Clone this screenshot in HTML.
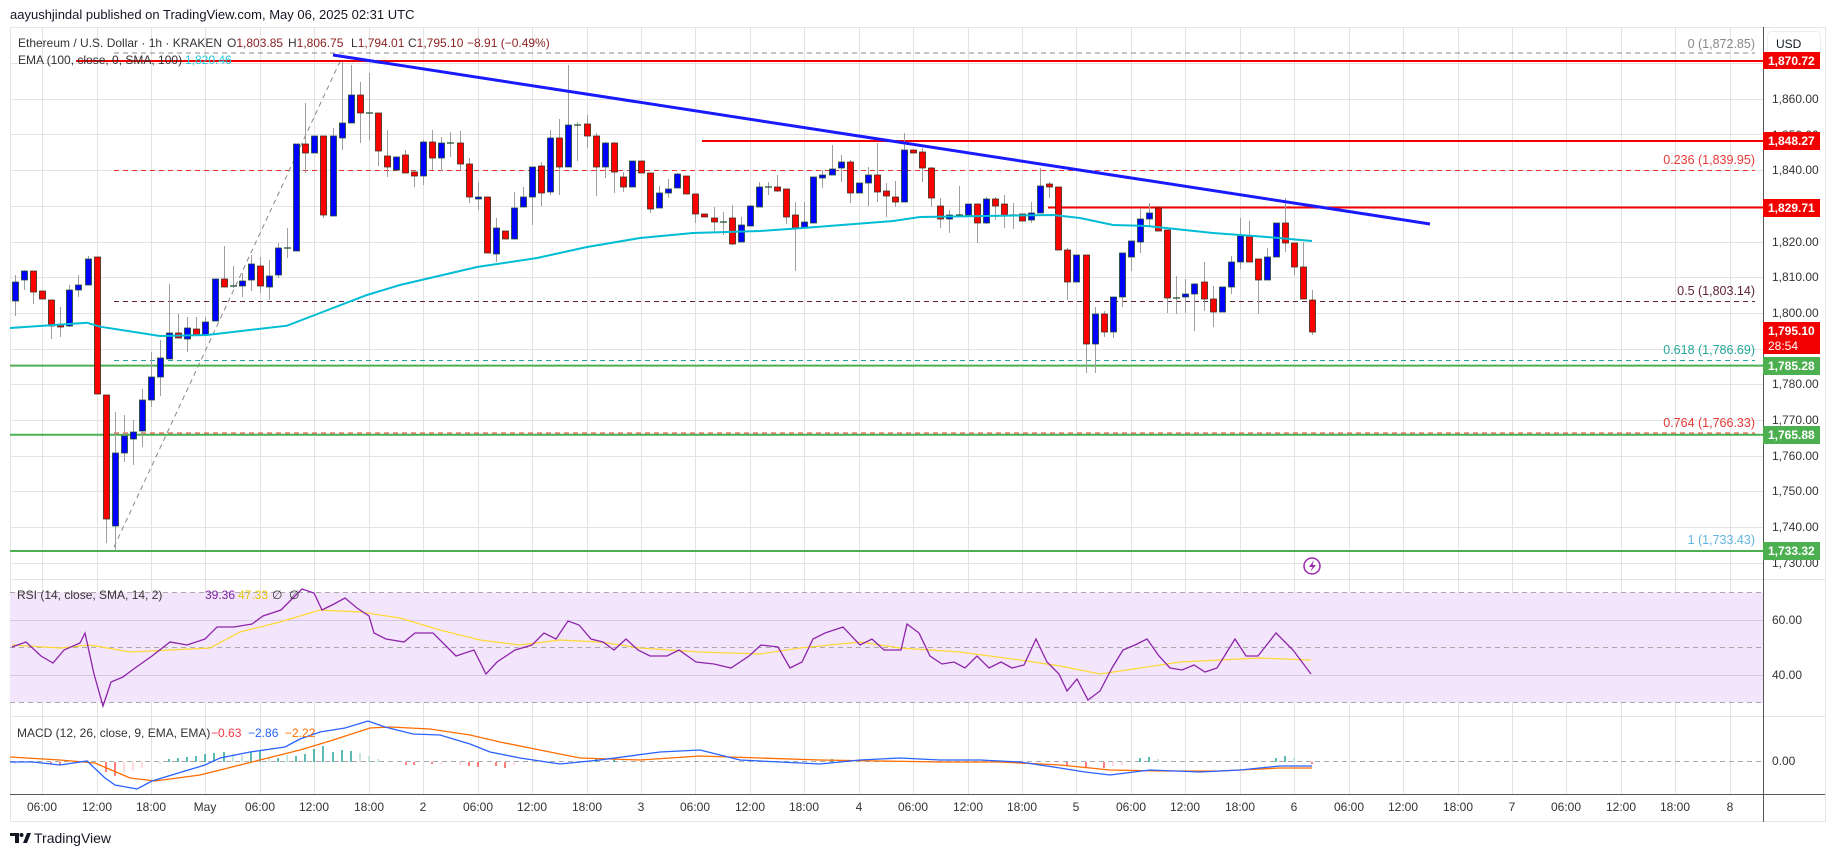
<!DOCTYPE html>
<html><head><meta charset="utf-8">
<style>
html,body{margin:0;padding:0;background:#fff;width:1835px;height:857px;overflow:hidden}
svg{display:block;font-family:"Liberation Sans","DejaVu Sans",sans-serif}
</style></head><body>
<svg width="1835" height="857" viewBox="0 0 1835 857" xmlns="http://www.w3.org/2000/svg">
<rect x="0" y="0" width="1835" height="857" fill="#fff"/>
<text x="10" y="19" font-size="13" fill="#131722">aayushjindal published on TradingView.com, May 06, 2025 02:31 UTC</text>
<rect x="10.5" y="27.5" width="1815" height="794" fill="#fff" stroke="#e6e6e6"/>
<!-- vertical grid -->
<path stroke="#e3e3e3" fill="none" d="M42.5 27V794M97.5 27V794M151.5 27V794M205.5 27V794M260.5 27V794M314.5 27V794M369.5 27V794M423.5 27V794M478.5 27V794M532.5 27V794M587.5 27V794M641.5 27V794M695.5 27V794M750.5 27V794M804.5 27V794M859.5 27V794M913.5 27V794M968.5 27V794M1022.5 27V794M1076.5 27V794M1131.5 27V794M1185.5 27V794M1240.5 27V794M1294.5 27V794M1349.5 27V794M1403.5 27V794M1458.5 27V794M1512.5 27V794M1566.5 27V794M1621.5 27V794M1675.5 27V794M1730.5 27V794"/>
<!-- horizontal price grid -->
<path stroke="#e3e3e3" fill="none" d="M10 63.5H1763M10 99.5H1763M10 134.5H1763M10 170.5H1763M10 206.5H1763M10 242.5H1763M10 277.5H1763M10 313.5H1763M10 349.5H1763M10 384.5H1763M10 420.5H1763M10 456.5H1763M10 491.5H1763M10 527.5H1763M10 563.5H1763"/>
<!-- RSI pane -->
<rect x="10" y="592.5" width="1753" height="110" fill="#f3e6fc"/>
<path stroke="#d5c8e3" d="M10 620.5H1763M10 675.5H1763"/>
<path stroke="#aaa" stroke-dasharray="5,4" d="M10 592.5H1763M10 647.5H1763M10 702.5H1763M10 761.5H1763"/>
<!-- fib lines -->
<g stroke-dasharray="5,4" fill="none">
<path d="M114 53H1755" stroke="#888"/>
<path d="M114 170.5H1755" stroke="#e53935"/>
<path d="M114 301.5H1755" stroke="#5d1f37"/>
<path d="M114 360.5H1755" stroke="#26a69a"/>
<path d="M114 433H1755" stroke="#e53935"/>
<path d="M114 551H1755" stroke="#5fb4e0"/>
<path d="M114 547L343 55" stroke="#888"/>
</g>
<path stroke="#4caf50" stroke-width="2" d="M10 365.6H1763M10 434.8H1763M10 551H1763"/>
<path stroke="#f20000" stroke-width="2" d="M76 61H1763M702 141H1763M1048 207.5H1763"/>
<!-- wicks -->
<path stroke="#9e9e9e" fill="none" d="M15.5 275V316M24.5 270V290M33.5 271V304M42.5 291V299M51.5 300V339M60.5 307V337M69.5 285V327M78.5 275V297M88.5 256V285M97.5 257V394M106.5 395V543M115.5 412V551M124.5 415V462M133.5 420V465M142.5 389V447M151.5 352V407M160.5 340V396M169.5 284V359M178.5 314V338M187.5 317V352M196.5 317V335M205.5 317V335M215.5 279V321M224.5 246V287M233.5 266V288M242.5 273V297M251.5 255V291M260.5 257V293M269.5 260V300M278.5 243V278M287.5 228V258M296.5 144V251M305.5 103V173M314.5 136V153M323.5 136V218M333.5 128V216M342.5 62V150M351.5 65V123M360.5 82V143M369.5 73V140M378.5 113V166M387.5 130V177M396.5 157V170M405.5 150V173M414.5 170V187M423.5 140V185M432.5 130V170M441.5 137V171M450.5 132V157M460.5 131V170M469.5 158V203M478.5 182V210M487.5 197V253M496.5 218V262M505.5 231V239M514.5 192V239M523.5 187V207M532.5 167V225M541.5 162V206M550.5 130V195M559.5 119V195M568.5 65V167M577.5 122V161M587.5 115V148M596.5 133V196M605.5 142V178M614.5 142V193M623.5 172V192M632.5 161V187M641.5 161V173M650.5 173V213M659.5 186V208M668.5 179V198M677.5 173V188M686.5 176V194M695.5 194V223M704.5 214V217M714.5 207V231M723.5 212V235M732.5 205V245M741.5 217V242M750.5 205V226M759.5 182V207M768.5 182V195M777.5 175V192M786.5 189V224M795.5 202V271M804.5 202V228M813.5 177V223M822.5 170V188M832.5 145V175M841.5 155V182M850.5 160V203M859.5 183V193M868.5 167V206M877.5 143V202M886.5 183V217M895.5 181V207M904.5 133V202M913.5 150V153M922.5 148V182M931.5 167V207M940.5 198V228M949.5 210V233M959.5 186V217M968.5 204V216M977.5 204V243M986.5 197V224M995.5 197V220M1004.5 195V228M1013.5 203V229M1022.5 214V221M1031.5 202V223M1040.5 168V213M1049.5 182V198M1058.5 187V250M1067.5 248V300M1076.5 255V282M1086.5 255V373M1095.5 307V373M1104.5 311V337M1113.5 297V338M1122.5 253V307M1131.5 241V271M1140.5 208V253M1149.5 203V227M1158.5 208V231M1167.5 230V313M1176.5 276V314M1185.5 279V313M1194.5 283V331M1204.5 262V311M1213.5 286V327M1222.5 287V312M1231.5 256V294M1240.5 218V269M1249.5 221V262M1258.5 259V314M1267.5 248V280M1276.5 223V257M1285.5 198V252M1294.5 243V275M1303.5 242V299M1312.5 290V335"/>
<!-- blue bodies -->
<path fill="#0000ff" stroke="#1e4d2b" stroke-width="0.8" d="M12.5 282h6V301h-6ZM21.5 271h6V280h-6ZM66.5 290h6V326h-6ZM75.5 285h6V290h-6ZM85.5 259h6V285h-6ZM112.5 453h6V526h-6ZM121.5 436h6V453h-6ZM130.5 432h6V439h-6ZM139.5 400h6V431h-6ZM148.5 377h6V400h-6ZM157.5 358h6V377h-6ZM166.5 333h6V359h-6ZM184.5 328h6V339h-6ZM202.5 322h6V335h-6ZM212.5 279h6V321h-6ZM239.5 281h6V286h-6ZM248.5 264h6V280h-6ZM266.5 276h6V287h-6ZM275.5 248h6V275h-6ZM293.5 144h6V251h-6ZM311.5 136h6V153h-6ZM330.5 136h6V216h-6ZM339.5 123h6V138h-6ZM348.5 95h6V123h-6ZM393.5 157h6V170h-6ZM420.5 142h6V176h-6ZM438.5 143h6V158h-6ZM475.5 197h6V199h-6ZM493.5 228h6V254h-6ZM511.5 208h6V239h-6ZM520.5 197h6V207h-6ZM529.5 167h6V197h-6ZM547.5 138h6V192h-6ZM565.5 125h6V167h-6ZM602.5 143h6V167h-6ZM629.5 161h6V187h-6ZM656.5 193h6V208h-6ZM665.5 189h6V193h-6ZM674.5 174h6V188h-6ZM738.5 225h6V242h-6ZM747.5 206h6V226h-6ZM756.5 187h6V207h-6ZM801.5 222h6V228h-6ZM810.5 177h6V223h-6ZM819.5 175h6V178h-6ZM829.5 169h6V175h-6ZM838.5 162h6V168h-6ZM856.5 183h6V193h-6ZM865.5 175h6V183h-6ZM901.5 150h6V202h-6ZM946.5 215h6V219h-6ZM965.5 204h6V215h-6ZM983.5 199h6V223h-6ZM1028.5 213h6V220h-6ZM1037.5 186h6V213h-6ZM1073.5 255h6V282h-6ZM1092.5 314h6V344h-6ZM1110.5 297h6V332h-6ZM1119.5 253h6V297h-6ZM1128.5 241h6V257h-6ZM1137.5 219h6V242h-6ZM1146.5 213h6V219h-6ZM1182.5 294h6V297h-6ZM1191.5 284h6V294h-6ZM1219.5 287h6V312h-6ZM1228.5 262h6V287h-6ZM1237.5 236h6V262h-6ZM1264.5 257h6V280h-6ZM1273.5 223h6V257h-6Z"/>
<!-- red bodies -->
<path fill="#ff0000" stroke="#3b2a1a" stroke-width="0.8" d="M30.5 271h6V292h-6ZM39.5 291h6V299h-6ZM48.5 300h6V326h-6ZM57.5 325h6V327h-6ZM94.5 257h6V394h-6ZM103.5 395h6V519h-6ZM175.5 333h6V338h-6ZM193.5 329h6V335h-6ZM221.5 279h6V287h-6ZM257.5 266h6V286h-6ZM302.5 144h6V153h-6ZM320.5 136h6V215h-6ZM357.5 95h6V113h-6ZM375.5 113h6V151h-6ZM384.5 156h6V167h-6ZM402.5 155h6V173h-6ZM411.5 172h6V176h-6ZM429.5 142h6V158h-6ZM457.5 143h6V164h-6ZM466.5 164h6V197h-6ZM484.5 197h6V253h-6ZM502.5 231h6V239h-6ZM538.5 166h6V193h-6ZM556.5 138h6V167h-6ZM584.5 124h6V136h-6ZM593.5 136h6V167h-6ZM611.5 143h6V172h-6ZM620.5 177h6V187h-6ZM638.5 161h6V173h-6ZM647.5 173h6V209h-6ZM683.5 176h6V194h-6ZM692.5 194h6V214h-6ZM701.5 214h6V217h-6ZM711.5 218h6V222h-6ZM729.5 218h6V244h-6ZM774.5 187h6V191h-6ZM783.5 189h6V217h-6ZM792.5 215h6V228h-6ZM847.5 162h6V193h-6ZM874.5 175h6V192h-6ZM883.5 191h6V196h-6ZM892.5 197h6V202h-6ZM910.5 150h6V153h-6ZM919.5 152h6V168h-6ZM928.5 168h6V198h-6ZM937.5 206h6V219h-6ZM974.5 204h6V223h-6ZM992.5 199h6V206h-6ZM1001.5 204h6V216h-6ZM1019.5 214h6V221h-6ZM1046.5 184h6V187h-6ZM1055.5 187h6V250h-6ZM1064.5 250h6V282h-6ZM1083.5 255h6V344h-6ZM1101.5 314h6V332h-6ZM1155.5 208h6V231h-6ZM1164.5 230h6V298h-6ZM1201.5 282h6V299h-6ZM1210.5 299h6V312h-6ZM1246.5 236h6V262h-6ZM1255.5 259h6V280h-6ZM1282.5 223h6V243h-6ZM1291.5 243h6V267h-6ZM1300.5 267h6V299h-6ZM1309.5 300h6V332h-6Z"/>
<!-- dojis -->
<path stroke="#1b4d2b" stroke-width="1.2" d="M230 286h7M284 248h7M366 113h7M447 143h7M574 125h7M720 222h7M765 187h7M956 215h7M1010 215h7M1173 298h7"/>
<!-- EMA -->
<polyline fill="none" stroke="#00bcd4" stroke-width="2" points="10,328 87,322.7 100,326.7 160,336 207,335 287,325.7 320,313 367,295 400,285 477,267 537,258 587,247 640,238 693,233 760,231 803,228 893,221 920,217 1053,215 1080,218 1113,225 1147,226 1213,233 1267,237 1312,241"/>
<!-- trend line -->
<line x1="333" y1="55" x2="1430" y2="224" stroke="#1a1aff" stroke-width="3"/>
<!-- RSI -->
<polyline fill="none" stroke="#fdd835" stroke-width="1.2" points="12,645 60,648 90,645 130,652 170,650 210,648 240,632 280,622 320,610 360,612 400,618 440,630 480,640 520,645 560,640 600,642 640,648 700,652 760,654 800,648 860,642 900,648 960,652 1020,660 1060,666 1100,674 1140,668 1180,662 1220,660 1260,658 1311,660"/>
<polyline fill="none" stroke="#8e24aa" stroke-width="1.3" points="12,647 26,642 41,656 53,663 64,650 80,643 85,633 94,674 103,706 111,682 123,677 135,668 152,656 170,642 187,645 205,639 217,627 234,627 252,624 263,616 281,610 293,598 302,589 314,593 322,610 334,604 345,598 357,608 369,616 374,633 386,639 404,642 415,633 433,633 445,645 456,656 474,650 486,674 497,662 515,650 532,645 544,633 556,639 568,621 579,625 591,639 603,642 614,650 626,639 638,650 650,656 667,656 679,650 696,662 714,664 731,668 749,656 761,645 778,647 790,668 802,662 813,639 825,633 843,627 860,645 872,639 884,650 901,650 907,624 919,633 930,656 942,664 954,662 965,668 977,656 989,668 1001,662 1012,668 1024,665 1036,639 1047,662 1059,674 1067,691 1077,679 1088,700 1100,691 1112,668 1123,650 1135,645 1147,639 1159,656 1170,668 1182,670 1194,665 1205,672 1217,668 1235,639 1246,656 1258,656 1276,633 1293,650 1311,674"/>
<!-- MACD histogram -->
<path stroke="#26a69a" stroke-width="1.5" d="M169 762V759M178 762V758M187 762V757M196 762V756M205 762V754M214 762V753M224 762V752M251 762V752M260 762V751M278 762V758M296 762V756M305 762V754M314 762V749M323 762V746M333 762V752M342 762V750M351 762V751M596 762V759M614 762V758M832 762V759M1140 762V758M1149 762V757M1276 762V758M1285 762V756"/>
<path stroke="#b2dfdb" stroke-width="1.5" d="M233 762V754M242 762V755M269 762V757M287 762V755M360 762V753M369 762V756M378 762V759M623 762V759M841 762V760M1158 762V759M1294 762V758"/>
<path stroke="#ff5252" stroke-width="1.5" d="M51 762V764M60 762V765M106 762V772M115 762V776M406 762V765M414 762V765M432 762V764M469 762V766M478 762V767M496 762V766M505 762V768M1067 762V766M1086 762V768M1104 762V768M1312 762V764"/>
<path stroke="#ffcdd2" stroke-width="1.5" d="M15 762V764M33 762V763M124 762V773M133 762V771M142 762V768M160 762V764M441 762V764M460 762V765M514 762V765M523 762V763M1113 762V766M1122 762V765"/>
<polyline fill="none" stroke="#ff6d00" stroke-width="1.3" points="10,757 60,760 95,763 130,778 155,781 200,775 260,760 300,750 330,741 370,728 390,727 430,729 470,735 500,742 540,750 580,758 640,760 700,756 760,758 820,760 880,761 940,762 1000,762 1060,765 1110,770 1160,771 1220,771 1280,768 1312,768"/>
<polyline fill="none" stroke="#2962ff" stroke-width="1.3" points="10,762 33,762 60,765 87,761 105,778 115,785 137,789 152,781 185,771 205,765 220,758 250,752 285,747 300,739 320,732 345,728 368,721 385,727 413,734 440,735 470,744 490,752 520,758 560,764 600,760 660,752 700,750 740,760 780,762 820,764 860,760 900,758 940,760 980,760 1020,762 1060,768 1085,772 1110,775 1150,770 1200,772 1240,770 1280,766 1312,766"/>
<!-- separators -->
<line x1="10" y1="579.5" x2="1825" y2="579.5" stroke="#e0e3eb"/>
<line x1="10" y1="716.5" x2="1825" y2="716.5" stroke="#e0e3eb"/>
<line x1="10" y1="794.5" x2="1825" y2="794.5" stroke="#555"/>
<line x1="1763.5" y1="27" x2="1763.5" y2="822" stroke="#555"/>
<!-- legend -->
<g font-size="12">
<text x="18" y="47" fill="#333">Ethereum / U.S. Dollar · 1h · KRAKEN</text>
<text x="227" y="47" fill="#333">O<tspan fill="#8b1f1f">1,803.85</tspan></text>
<text x="288" y="47" fill="#333">H<tspan fill="#8b1f1f">1,806.75</tspan></text>
<text x="351" y="47" fill="#333">L<tspan fill="#8b1f1f">1,794.01</tspan></text>
<text x="408" y="47" fill="#333">C<tspan fill="#8b1f1f">1,795.10</tspan></text>
<text x="467" y="47" fill="#8b1f1f">−8.91 (−0.49%)</text>
<text x="18" y="64" fill="#333">EMA (100, close, 0, SMA, 100)</text>
<text x="185" y="64" fill="#26c6da">1,820.46</text>
</g>
<!-- fib labels -->
<g font-size="12.5" text-anchor="end">
<text x="1755" y="48" fill="#888">0 (1,872.85)</text>
<text x="1755" y="164" fill="#e53935">0.236 (1,839.95)</text>
<text x="1755" y="295" fill="#5d1f37">0.5 (1,803.14)</text>
<text x="1755" y="354" fill="#26a69a">0.618 (1,786.69)</text>
<text x="1755" y="427" fill="#e53935">0.764 (1,766.33)</text>
<text x="1755" y="544" fill="#5fb4e0">1 (1,733.43)</text>
</g>
<!-- price axis -->
<g font-size="12" fill="#333">
<text x="1772" y="103">1,860.00</text>
<text x="1772" y="139">1,850.00</text>
<text x="1772" y="174">1,840.00</text>
<text x="1772" y="246">1,820.00</text>
<text x="1772" y="281">1,810.00</text>
<text x="1772" y="317">1,800.00</text>
<text x="1772" y="388">1,780.00</text>
<text x="1772" y="424">1,770.00</text>
<text x="1772" y="460">1,760.00</text>
<text x="1772" y="495">1,750.00</text>
<text x="1772" y="531">1,740.00</text>
<text x="1772" y="567">1,730.00</text>
<text x="1772" y="624">60.00</text>
<text x="1772" y="679">40.00</text>
<text x="1772" y="765">0.00</text>
</g>
<rect x="1767.5" y="31.5" width="53" height="25" rx="4" fill="#fff" stroke="#eee"/>
<text x="1776" y="48" font-size="12" fill="#131722">USD</text>
<g font-size="12" font-weight="bold" fill="#fff">
<rect x="1763" y="52" width="57" height="17" fill="#f20000"/><text x="1768" y="65">1,870.72</text>
<rect x="1763" y="132" width="57" height="18" fill="#f20000"/><text x="1768" y="145">1,848.27</text>
<rect x="1763" y="199" width="57" height="18" fill="#f20000"/><text x="1768" y="212">1,829.71</text>
<rect x="1763" y="322" width="57" height="32" fill="#f20000"/><text x="1768" y="335">1,795.10</text>
<text x="1768" y="350" font-weight="normal">28:54</text>
<rect x="1763" y="357" width="57" height="18" fill="#4caf50"/><text x="1768" y="370">1,785.28</text>
<rect x="1763" y="426" width="57" height="18" fill="#4caf50"/><text x="1768" y="439">1,765.88</text>
<rect x="1763" y="542" width="57" height="18" fill="#4caf50"/><text x="1768" y="555">1,733.32</text>
</g>
<!-- indicator labels -->
<g font-size="12">
<text x="17" y="599" fill="#333">RSI (14, close, SMA, 14, 2)</text>
<text x="205" y="599" fill="#7e1fa0">39.36</text>
<text x="238" y="599" fill="#e6c700">47.33</text>
<text x="272" y="599" fill="#333">∅</text>
<text x="289" y="599" fill="#333">∅</text>
<text x="17" y="737" fill="#333">MACD (12, 26, close, 9, EMA, EMA)</text>
<text x="211" y="737" fill="#f23645">−0.63</text>
<text x="248" y="737" fill="#2962ff">−2.86</text>
<text x="285" y="737" fill="#ff6d00">−2.22</text>
</g>
<!-- time axis -->
<g font-size="12" fill="#333" text-anchor="middle">
<text x="42" y="811">06:00</text><text x="97" y="811">12:00</text><text x="151" y="811">18:00</text><text x="205" y="811">May</text>
<text x="260" y="811">06:00</text><text x="314" y="811">12:00</text><text x="369" y="811">18:00</text><text x="423" y="811">2</text>
<text x="478" y="811">06:00</text><text x="532" y="811">12:00</text><text x="587" y="811">18:00</text><text x="641" y="811">3</text>
<text x="695" y="811">06:00</text><text x="750" y="811">12:00</text><text x="804" y="811">18:00</text><text x="859" y="811">4</text>
<text x="913" y="811">06:00</text><text x="968" y="811">12:00</text><text x="1022" y="811">18:00</text><text x="1076" y="811">5</text>
<text x="1131" y="811">06:00</text><text x="1185" y="811">12:00</text><text x="1240" y="811">18:00</text><text x="1294" y="811">6</text>
<text x="1349" y="811">06:00</text><text x="1403" y="811">12:00</text><text x="1458" y="811">18:00</text><text x="1512" y="811">7</text>
<text x="1566" y="811">06:00</text><text x="1621" y="811">12:00</text><text x="1675" y="811">18:00</text><text x="1730" y="811">8</text>
</g>
<!-- lightning icon -->
<circle cx="1312" cy="566" r="8" fill="#fff" stroke="#9c27b0" stroke-width="1.5"/>
<path d="M1314 560 L1309 567 L1312.5 567 L1310 572 L1316 565 L1312.5 565 Z" fill="#9c27b0"/>
<!-- logo -->
<g transform="translate(10,833)" fill="#131722">
<path d="M0 0 H9 V10 H5 V3 H0 Z"/><circle cx="11.5" cy="2" r="2"/><path d="M13 10 L17 0 H21 L17 10 Z"/>
</g>
<text x="34" y="843" font-size="14" fill="#131722">TradingView</text>
</svg>
</body></html>
